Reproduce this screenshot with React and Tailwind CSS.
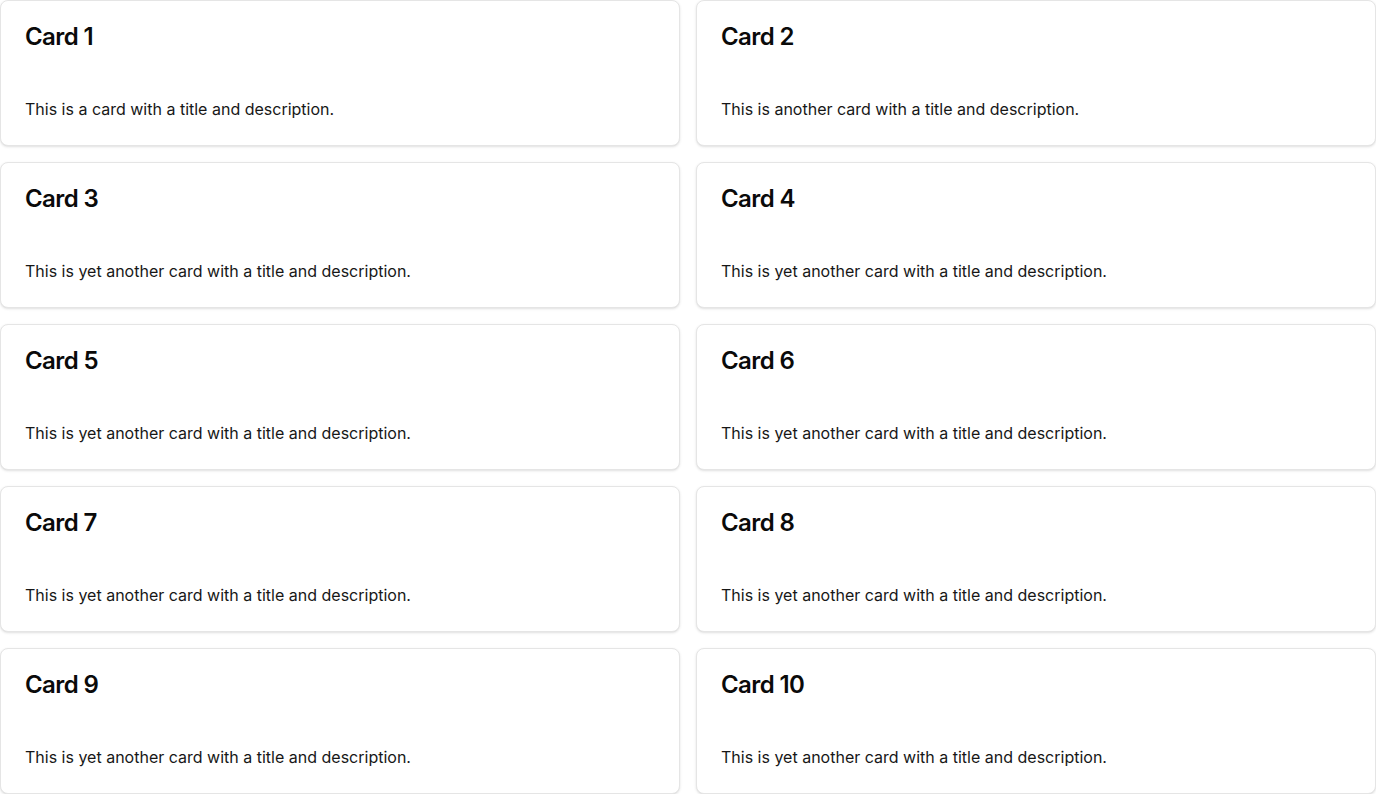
import React from "react";

const cards = [
  { title: "Card 1", text: "This is a card with a title and description." },
  { title: "Card 2", text: "This is another card with a title and description." },
  { title: "Card 3", text: "This is yet another card with a title and description." },
  { title: "Card 4", text: "This is yet another card with a title and description." },
  { title: "Card 5", text: "This is yet another card with a title and description." },
  { title: "Card 6", text: "This is yet another card with a title and description." },
  { title: "Card 7", text: "This is yet another card with a title and description." },
  { title: "Card 8", text: "This is yet another card with a title and description." },
  { title: "Card 9", text: "This is yet another card with a title and description." },
  { title: "Card 10", text: "This is yet another card with a title and description." },
];

const App = () => {
  return (
    <div
      className="h-[794px] w-full bg-white grid grid-cols-2 grid-rows-5 gap-4"
      style={{ fontFamily: "Inter, 'Noto Sans', sans-serif" }}
    >
      {cards.map((card, index) => (
        <div
          key={index}
          className="flex flex-col justify-between rounded-lg border border-[#e5e5e5] bg-white shadow-sm p-6"
        >
          <h3 className="text-2xl leading-none font-semibold tracking-tight text-[#0a0a0a]">
            {card.title}
          </h3>
          <p className="text-base leading-6 text-[#171717]">{card.text}</p>
        </div>
      ))}
    </div>
  );
};

export default App;
